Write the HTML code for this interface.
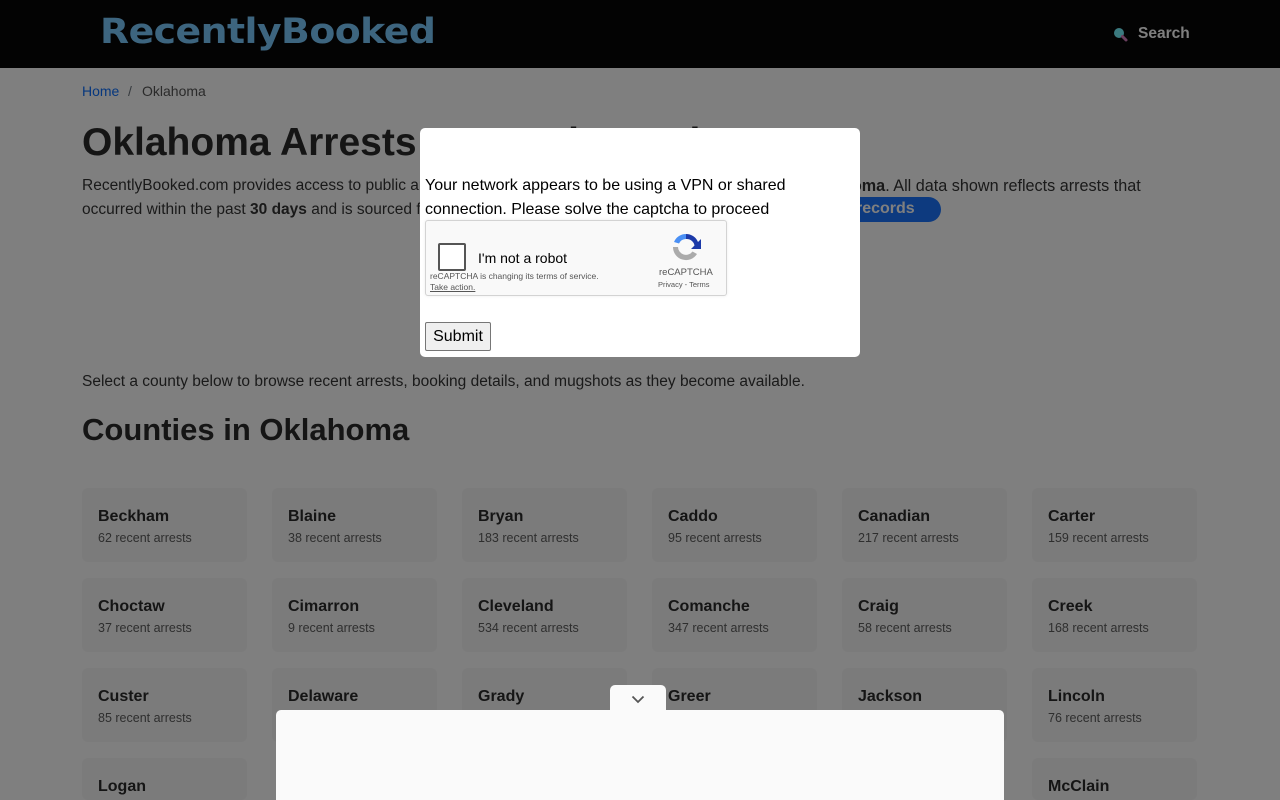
<!DOCTYPE html>
<html><head><meta charset="utf-8"><style>
*{margin:0;padding:0;box-sizing:border-box}
html,body{width:1280px;height:800px;overflow:hidden;background:#fff}
body{font-family:"Liberation Sans",sans-serif;color:#212529}
#root{position:relative;width:1280px;height:800px;overflow:hidden;background:#fff}
.abs{position:absolute;white-space:nowrap}
.hdr{position:absolute;left:0;top:0;width:1280px;height:68px;background:#070707}
.logo{position:absolute;left:100px;top:12px;font-family:"DejaVu Sans","Liberation Sans",sans-serif;font-size:35px;font-weight:bold;letter-spacing:-0.5px;color:#7bcaff;transform:scaleX(1.08);transform-origin:left top}
.card{position:absolute;width:165px;height:74px;background:#f6f6f6;border-radius:6px}
.card b{position:absolute;left:16px;top:20px;font-size:16px;font-weight:bold;color:#2a2a2a}
.card span{position:absolute;left:16px;top:43px;font-size:12.5px;color:#5c5c5c}
p.t{font-size:15.5px;color:#343434}
#ov{position:absolute;left:0;top:0;width:1280px;height:800px;background:rgba(0,0,0,.5)}
</style></head><body><div id="root">
<div class="hdr">
<div class="logo">RecentlyBooked</div>
<svg class="abs" style="left:1112px;top:26px" width="18" height="18" viewBox="0 0 18 18"><circle cx="7" cy="7" r="5" fill="#76f4ff"/><line x1="10.5" y1="10.5" x2="14" y2="14" stroke="#d47ebc" stroke-width="3" stroke-linecap="round"/></svg>
<div class="abs" style="left:1138px;top:25px;font-size:15.5px;font-weight:bold;color:#fff">Search</div>
</div>
<div class="abs" style="left:82px;top:83px;font-size:14px;color:#0d6efd">Home</div>
<div class="abs" style="left:128px;top:83px;font-size:14px;color:#6c757d">/</div>
<div class="abs" style="left:142px;top:83px;font-size:14px;color:#555">Oklahoma</div>
<div class="abs" style="left:82px;top:121px;font-size:39px;font-weight:bold;color:#2a2a2a">Oklahoma Arrests &amp; Mugshots Directory</div>
<p class="t abs" style="left:82px;top:177px">RecentlyBooked.com provides access to public arrest records for counties in</p>
<p class="t abs" style="left:842px;top:177px;font-size:16.2px"><b>homa</b>. All data shown reflects arrests that</p>
<p class="t abs" style="left:82px;top:201px">occurred within the past <b>30 days</b> and is sourced from official county records.</p>
<div class="abs" style="left:800px;top:197px;width:141px;height:25px;border-radius:13px;background:#1a74ff;color:#fff;font-size:16px;font-weight:bold;padding:3px 0 0 40px">rt records</div>
<p class="t abs" style="left:82px;top:373px">Select a county below to browse recent arrests, booking details, and mugshots as they become available.</p>
<div class="abs" style="left:82px;top:412px;font-size:31px;font-weight:bold;color:#2a2a2a">Counties in Oklahoma</div>

<div class="card" style="left:82px;top:488px"><b>Beckham</b><span>62 recent arrests</span></div>
<div class="card" style="left:272px;top:488px"><b>Blaine</b><span>38 recent arrests</span></div>
<div class="card" style="left:462px;top:488px"><b>Bryan</b><span>183 recent arrests</span></div>
<div class="card" style="left:652px;top:488px"><b>Caddo</b><span>95 recent arrests</span></div>
<div class="card" style="left:842px;top:488px"><b>Canadian</b><span>217 recent arrests</span></div>
<div class="card" style="left:1032px;top:488px"><b>Carter</b><span>159 recent arrests</span></div>
<div class="card" style="left:82px;top:578px"><b>Choctaw</b><span>37 recent arrests</span></div>
<div class="card" style="left:272px;top:578px"><b>Cimarron</b><span>9 recent arrests</span></div>
<div class="card" style="left:462px;top:578px"><b>Cleveland</b><span>534 recent arrests</span></div>
<div class="card" style="left:652px;top:578px"><b>Comanche</b><span>347 recent arrests</span></div>
<div class="card" style="left:842px;top:578px"><b>Craig</b><span>58 recent arrests</span></div>
<div class="card" style="left:1032px;top:578px"><b>Creek</b><span>168 recent arrests</span></div>
<div class="card" style="left:82px;top:668px"><b>Custer</b><span>85 recent arrests</span></div>
<div class="card" style="left:272px;top:668px"><b>Delaware</b><span></span></div>
<div class="card" style="left:462px;top:668px"><b>Grady</b><span></span></div>
<div class="card" style="left:652px;top:668px"><b>Greer</b><span></span></div>
<div class="card" style="left:842px;top:668px"><b>Jackson</b><span></span></div>
<div class="card" style="left:1032px;top:668px"><b>Lincoln</b><span>76 recent arrests</span></div>
<div class="card" style="left:82px;top:758px;height:42px"><b>Logan</b></div>
<div class="card" style="left:1032px;top:758px;height:42px"><b>McClain</b></div>

<div id="ov"></div>

<div class="abs" style="left:420px;top:128px;width:440px;height:229px;background:#fff;border-radius:5px">
<div class="abs" style="left:5px;top:46px;font-size:16px;line-height:24px;color:#000;white-space:normal;width:420px">Your network appears to be using a VPN or shared connection. Please solve the captcha to proceed</div>
<div class="abs" style="left:5px;top:92px;width:302px;height:76px;background:#f9f9f9;border:1px solid #d3d3d3;border-radius:3px;box-shadow:0 0 3px rgba(0,0,0,.08)">
<div class="abs" style="left:12px;top:22px;width:28px;height:28px;border:2px solid #555;border-radius:2px;background:#fff"></div>
<div class="abs" style="left:52px;top:29px;font-size:14px;color:#000">I'm not a robot</div>
<div class="abs" style="left:4px;top:50px;font-size:8.5px;color:#555">reCAPTCHA is changing its terms of service.</div>
<div class="abs" style="left:4px;top:61px;font-size:8.5px;color:#555;text-decoration:underline">Take action.</div>
<svg class="abs" style="left:244px;top:10px" width="32" height="32" viewBox="0 0 32 32"><path d="M16 3a13 13 0 0 1 12 8l3-3v10h-10l3.5-3.5A8 8 0 0 0 16 8z" fill="#1c3aa9"/><path d="M16 3A13 13 0 0 0 4 11l5 1.5A8 8 0 0 1 16 8z" fill="#4a90f5"/><path d="M3 16a13 13 0 0 0 24 7l-4.5-2.5A8 8 0 0 1 8 16H3z" fill="#ababab"/></svg>
<div class="abs" style="left:233px;top:46px;font-size:9.5px;color:#555">reCAPTCHA</div>
<div class="abs" style="left:232px;top:59px;font-size:7.5px;color:#555">Privacy - Terms</div>
</div>
<div class="abs" style="left:5px;top:194px;width:66px;height:29px;background:#efefef;border:1px solid #767676;border-radius:2px;font-size:16px;color:#000;text-align:center;line-height:27px">Submit</div>
</div>

<div class="abs" style="left:276px;top:710px;width:728px;height:90px;background:#fafafa;border-radius:5px 5px 0 0"></div>
<div class="abs" style="left:610px;top:685px;width:56px;height:26px;background:#fafafa;border-radius:5px 5px 0 0">
<svg class="abs" style="left:21px;top:10px" width="14" height="9" viewBox="0 0 14 9"><path d="M1.5 1.5L7 7l5.5-5.5" fill="none" stroke="#555" stroke-width="1.8"/></svg>
</div>
</div></body></html>
